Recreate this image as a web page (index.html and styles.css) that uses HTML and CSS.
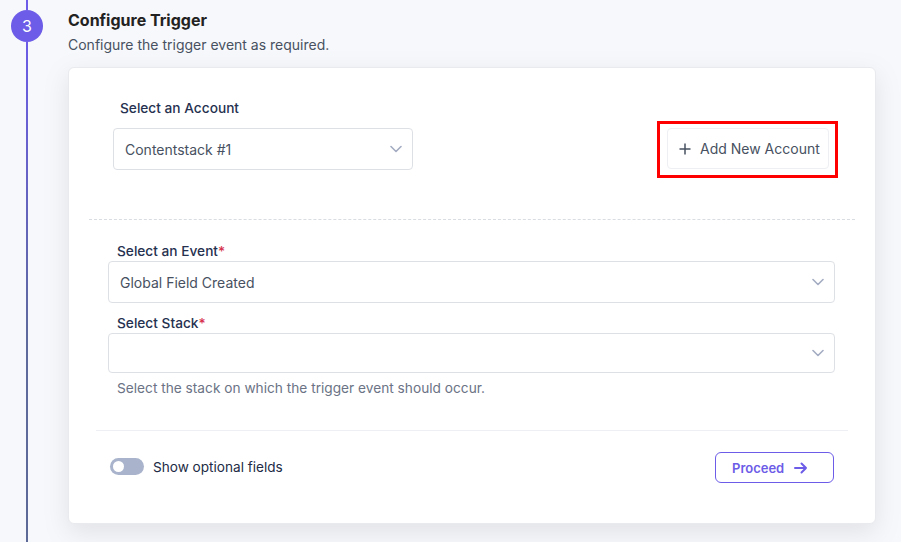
FILE: index.html
```html
<!DOCTYPE html>
<html lang="en">
<head>
  <meta charset="UTF-8">
  <title>Configure Trigger</title>
  <link rel="stylesheet" href="styles.css">
</head>
<body>
  <div class='step'>
    <div class='rail'>
      <div class='rail-top'></div>
      <div class='step-num'>3</div>
      <div class='rail-bottom'></div>
    </div>
    <div class='step-body'>
      <h3 class='step-title'>Configure Trigger</h3>
      <p class='step-desc'>Configure the trigger event as required.</p>
      <div class='card'>
        <div class='account-section'>
          <div class='account-field'>
            <label class='field-label account-label'>Select an Account</label>
            <div class='select account-select'>
              <span>Contentstack #1</span>
              <svg class='chevron' viewBox='0 0 12 8' width='12' height='8'><path d='M1 1.5l5 5 5-5' fill='none' stroke='currentColor' stroke-width='1.6' stroke-linecap='round' stroke-linejoin='round'/></svg>
            </div>
          </div>
          <div class='highlight'>
            <button class='add-account'>
              <svg viewBox='0 0 12 12' width='12' height='12'><path d='M6 0.5v11M0.5 6h11' stroke='currentColor' stroke-width='1.5' fill='none'/></svg>
              Add New Account
            </button>
          </div>
        </div>
        <div class='divider-dashed'></div>
        <div class='fields'>
          <label class='field-label'>Select an Event<span class='req'>*</span></label>
          <div class='select event-select'>
            <span>Global Field Created</span>
            <svg class='chevron' viewBox='0 0 12 8' width='12' height='8'><path d='M1 1.5l5 5 5-5' fill='none' stroke='currentColor' stroke-width='1.6' stroke-linecap='round' stroke-linejoin='round'/></svg>
          </div>
          <label class='field-label stack-label'>Select Stack<span class='req'>*</span></label>
          <div class='select stack-select'>
            <span></span>
            <svg class='chevron' viewBox='0 0 12 8' width='12' height='8'><path d='M1 1.5l5 5 5-5' fill='none' stroke='currentColor' stroke-width='1.6' stroke-linecap='round' stroke-linejoin='round'/></svg>
          </div>
          <p class='help'>Select the stack on which the trigger event should occur.</p>
        </div>
        <div class='divider-solid'></div>
        <div class='footer'>
          <div class='toggle-row'>
            <span class='toggle'><span class='knob'></span></span>
            <span>Show optional fields</span>
          </div>
          <button class='proceed'>
            Proceed
            <svg viewBox='0 0 14 12' width='14' height='12'><path d='M1 6h11M7.5 1.5L12 6l-4.5 4.5' fill='none' stroke='currentColor' stroke-width='2' stroke-linecap='round' stroke-linejoin='round'/></svg>
          </button>
        </div>
      </div>
    </div>
  </div>
</body>
</html>
```

FILE: styles.css
```css
body { margin: 0; background-color: #f7f8fb; font-family: Inter, "Noto Sans", sans-serif; color: #222b45; height: 542px; overflow: hidden; }
.step { display: flex; height: 542px; }
.rail { width: 54px; display: flex; flex-direction: column; align-items: center; flex-shrink: 0; }
.rail-top { width: 2px; height: 10px; background-color: #6c5ce7; }
.step-num { width: 32px; height: 32px; border-radius: 50%; background-color: #6c5ce7; color: #fff; font-size: 16px; display: flex; align-items: center; justify-content: center; }
.rail-bottom { width: 2px; flex: 1; background: linear-gradient(#6c5ce7, #5e6a9c 60%, #5d6a98); }
.step-body { margin-left: 14px; width: 808px; }
.step-title { margin: 10px 0 0; font-size: 16px; line-height: 20px; font-weight: 700; color: #222222; }
.step-desc { margin: 5px 0 0; font-size: 14px; line-height: 20px; color: #475161; }
.card { margin-top: 12px; background-color: #fff; border: 1px solid #e9eaee; border-radius: 6px; height: 455px; box-shadow: 0 8px 24px rgba(120, 125, 140, 0.18); }
.account-section { display: flex; justify-content: space-between; padding: 30px 37px 0 44px; }
.field-label { display: block; font-size: 13.7px; line-height: 20px; font-weight: 500; color: #263150; }
.account-label { padding-left: 7px; margin-bottom: 10px; }
.req { color: #d62f4b; }
.select { display: flex; align-items: center; justify-content: space-between; box-sizing: border-box; border: 1px solid #dde0e5; border-radius: 4px; padding: 0 10px 0 11px; font-size: 14px; color: #475161; background: #fff; }
.chevron { color: #a3acc2; }
.account-select { width: 300px; height: 42px; }
.highlight { border: 3px solid #ff0000; padding: 4px 6px 6px 7px; margin-top: 23px; align-self: flex-start; }
.add-account { display: flex; align-items: center; gap: 9px; height: 41px; width: 162px; box-sizing: border-box; padding: 0 0 0 11px; border: 1px solid #edeff3; border-radius: 4px; background: #fff; font-family: inherit; font-size: 14px; color: #475161; }
.add-account svg { color: #475161; }
.divider-dashed { margin: 41px 20px 0; border-top: 1px dashed #d9dce1; }
.fields { padding: 21px 40px 0 39px; }
.fields .field-label { padding-left: 9px; }
.event-select { height: 42px; }
.stack-label { margin-top: 10px; }
.stack-select { height: 40px; }
.help { margin: 5px 0 0 9px; font-size: 13.7px; line-height: 20px; color: #6b7385; }
.divider-solid { margin: 32px 27px 0; border-top: 1px solid #edeff4; }
.footer { display: flex; justify-content: space-between; align-items: center; padding: 19px 41px 0 41px; }
.toggle-row { display: flex; align-items: center; gap: 9px; font-size: 13.6px; color: #222b45; }
.toggle { display: flex; align-items: center; width: 34px; height: 17px; border-radius: 9px; background-color: #a9b4cc; box-sizing: border-box; padding: 0 3px; }
.knob { width: 11px; height: 11px; border-radius: 50%; background: #fff; }
.proceed { display: flex; align-items: center; gap: 10px; width: 119px; height: 31px; margin-top: 2px; border: 1px solid #6c5ce7; border-radius: 6px; background: #fff; color: #6c5ce7; font-family: inherit; font-size: 13px; font-weight: 600; padding: 0 0 0 16px; }
```
